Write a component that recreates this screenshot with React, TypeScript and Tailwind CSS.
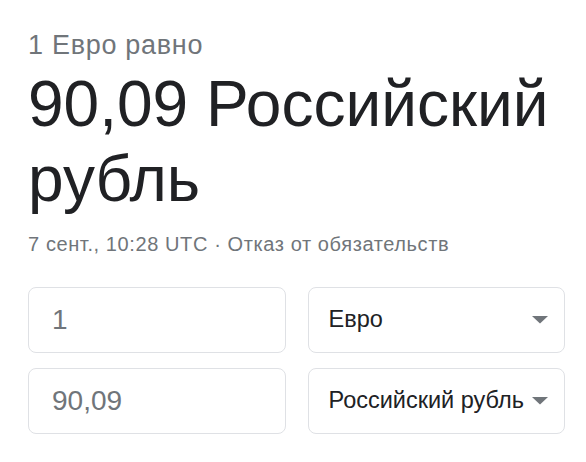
import { useState } from 'react'

const font = { fontFamily: '"Liberation Sans", Arial, sans-serif' }

function Caret() {
  return (
    <svg width="16" height="8" viewBox="0 0 16 8" className="shrink-0">
      <path d="M0 0h16L8 7.5z" fill="#70757a" />
    </svg>
  )
}

function AmountBox({ value }: { value: string }) {
  return (
    <div className="h-[66px] rounded-lg border border-[#dfe1e5] flex items-center px-[23px]">
      <span className="text-[28px] text-[#70757a]">{value}</span>
    </div>
  )
}

function CurrencySelect({ label }: { label: string }) {
  return (
    <div className="h-[66px] rounded-lg border border-[#dfe1e5] flex items-center justify-between pl-5 pr-4">
      <span className="text-[23.5px] text-[#202124] whitespace-nowrap">{label}</span>
      <Caret />
    </div>
  )
}

export default function App() {
  const [rows] = useState([
    { value: '1', label: 'Евро' },
    { value: '90,09', label: 'Российский рубль' },
  ])

  return (
    <div className="w-[586px] h-[462px] bg-white pl-[28px] pr-[21px] pt-[30px]" style={font}>
      <div className="text-[27px] leading-[30px] tracking-[0.7px] text-[#70757a]">1 Евро равно</div>
      <div className="mt-[7px] text-[64px] leading-[75px] text-[#202124]">90,09 Российский рубль</div>
      <div className="mt-[15px] text-[20px] leading-[24px] tracking-[0.6px] text-[#70757a] whitespace-nowrap">
        7 сент., 10:28 UTC · Отказ от обязательств
      </div>

      <div className="mt-[31px] flex flex-col gap-[15px]">
        {rows.map((r) => (
          <div key={r.label} className="grid grid-cols-2 gap-[22px]">
            <AmountBox value={r.value} />
            <CurrencySelect label={r.label} />
          </div>
        ))}
      </div>
    </div>
  )
}
